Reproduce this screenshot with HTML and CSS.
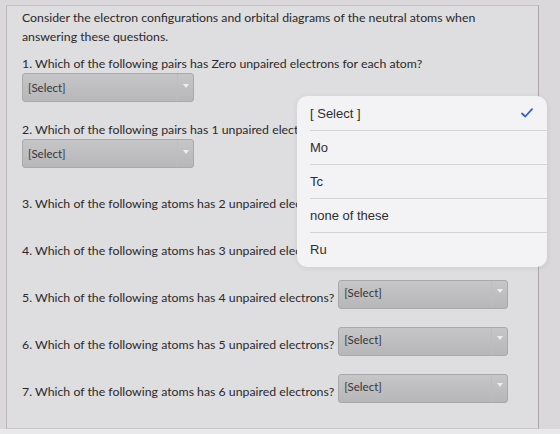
FILE: index.html
```html
<!DOCTYPE html>
<html lang="en">
<head>
  <meta charset="UTF-8" />
  <title>Quiz</title>
  <link rel="stylesheet" href="styles.css">
</head>
<body>

  <div class="page">
    <div class="panel">
      <p class="intro">Consider the electron configurations and orbital diagrams of the neutral atoms when answering these questions.</p>

      <div class="question stacked first">
        <p class="label">1. Which of the following pairs has Zero unpaired electrons for each atom?</p>
        <div class="select"><span>[Select]</span><i class="arrow"></i></div>
      </div>

      <div class="question stacked">
        <p class="label">2. Which of the following pairs has 1 unpaired electron for each atom?</p>
        <div class="select"><span>[Select]</span><i class="arrow"></i></div>
      </div>

      <div class="question inline">
        <p class="label">3. Which of the following atoms has 2 unpaired electrons?</p>
        <div class="select"><span>[Select]</span><i class="arrow"></i></div>
      </div>

      <div class="question inline">
        <p class="label">4. Which of the following atoms has 3 unpaired electrons?</p>
        <div class="select"><span>[Select]</span><i class="arrow"></i></div>
      </div>

      <div class="question inline">
        <p class="label">5. Which of the following atoms has 4 unpaired electrons?</p>
        <div class="select"><span>[Select]</span><i class="arrow"></i></div>
      </div>

      <div class="question inline">
        <p class="label">6. Which of the following atoms has 5 unpaired electrons?</p>
        <div class="select"><span>[Select]</span><i class="arrow"></i></div>
      </div>

      <div class="question inline">
        <p class="label">7. Which of the following atoms has 6 unpaired electrons?</p>
        <div class="select"><span>[Select]</span><i class="arrow"></i></div>
      </div>
    </div>

    <!-- native picker opened over question 2 -->
    <ul class="picker">
      <li class="picked">[ Select ]
        <svg class="check" width="12" height="10" viewBox="0 0 12 10"><path d="M1 5.5 L4.3 8.5 L11 1.2" fill="none" stroke="#2f64c8" stroke-width="1.8" stroke-linecap="round" stroke-linejoin="round"/></svg>
      </li>
      <li>Mo</li>
      <li>Tc</li>
      <li>none of these</li>
      <li>Ru</li>
    </ul>
  </div>

</body>
</html>
```

FILE: styles.css
```css
* {
  box-sizing: border-box;
  margin: 0;
  padding: 0;
}

body {
  font-family: 'Lato', 'Liberation Sans', sans-serif;
  background: #dad8da;
  color: #2a2a2c;
  width: 560px;
  height: 434px;
  overflow: hidden;
}

.page {
  position: relative;
  height: 434px;
  padding-top: 5px;
  border-bottom: 5px solid #e9e8ea;
}

.panel {
  margin-left: 6px;
  width: 533px;
  height: 424px;
  background: #dedddf;
  border-top: 1px solid #c4c2c5;
  border-left: 1px solid #b9b7ba;
  border-right: 1px solid #a9a7aa;
  border-bottom: 1px solid #c9c7ca;
  padding: 2px 0 0 15px;
  font-size: 12.3px;
  line-height: 19px;
}

.intro {
  width: 485px;
}

.question.first {
  margin-top: 8px;
}

.question.stacked {
  margin-bottom: 18px;
}

.question.stacked + .question.stacked .label {
  margin-top: 2px;
}

.question.inline {
  display: flex;
  align-items: flex-start;
  gap: 4px;
  height: 29px;
  margin-bottom: 18px;
  white-space: nowrap;
}

.question.inline .label {
  margin-top: 8px;
}

.select {
  position: relative;
  width: 172px;
  height: 29px;
  background: linear-gradient(#c6c5c7, #b7b6b8);
  border: 1px solid #a9a8aa;
  border-radius: 3px;
  font-size: 11.5px;
  color: #363638;
  padding: 7px 0 0 5px;
  line-height: 14px;
}

.question.inline .select {
  width: 170px;
  padding-top: 5px;
}

.select .arrow {
  position: absolute;
  top: 0;
  right: 0;
  width: 16px;
  height: 27px;
  border-left: 1px solid #bdbcbe;
}

.select .arrow::after {
  content: "";
  position: absolute;
  left: 5px;
  top: 10px;
  border-left: 3px solid transparent;
  border-right: 3px solid transparent;
  border-top: 4px solid #eeeeef;
}

.question.inline .select .arrow::after {
  top: 8px;
}

.picker {
  position: absolute;
  left: 297px;
  top: 96px;
  width: 250px;
  list-style: none;
  background: #f3f2f4;
  border-radius: 10px;
  box-shadow: 0 1px 6px rgba(0, 0, 0, 0.08);
  font-family: 'Liberation Sans', 'Lato', sans-serif;
  font-size: 13px;
  color: #2e2e30;
  overflow: hidden;
}

.picker li {
  position: relative;
  height: 34px;
  line-height: 34px;
  margin-left: 13px;
  border-bottom: 1px solid #d3d2d5;
}

.picker li.picked {
  height: 35px;
  line-height: 35px;
}

.picker li:last-child {
  border-bottom: none;
}

.picker .check {
  position: absolute;
  right: 14px;
  top: 12px;
}
```
